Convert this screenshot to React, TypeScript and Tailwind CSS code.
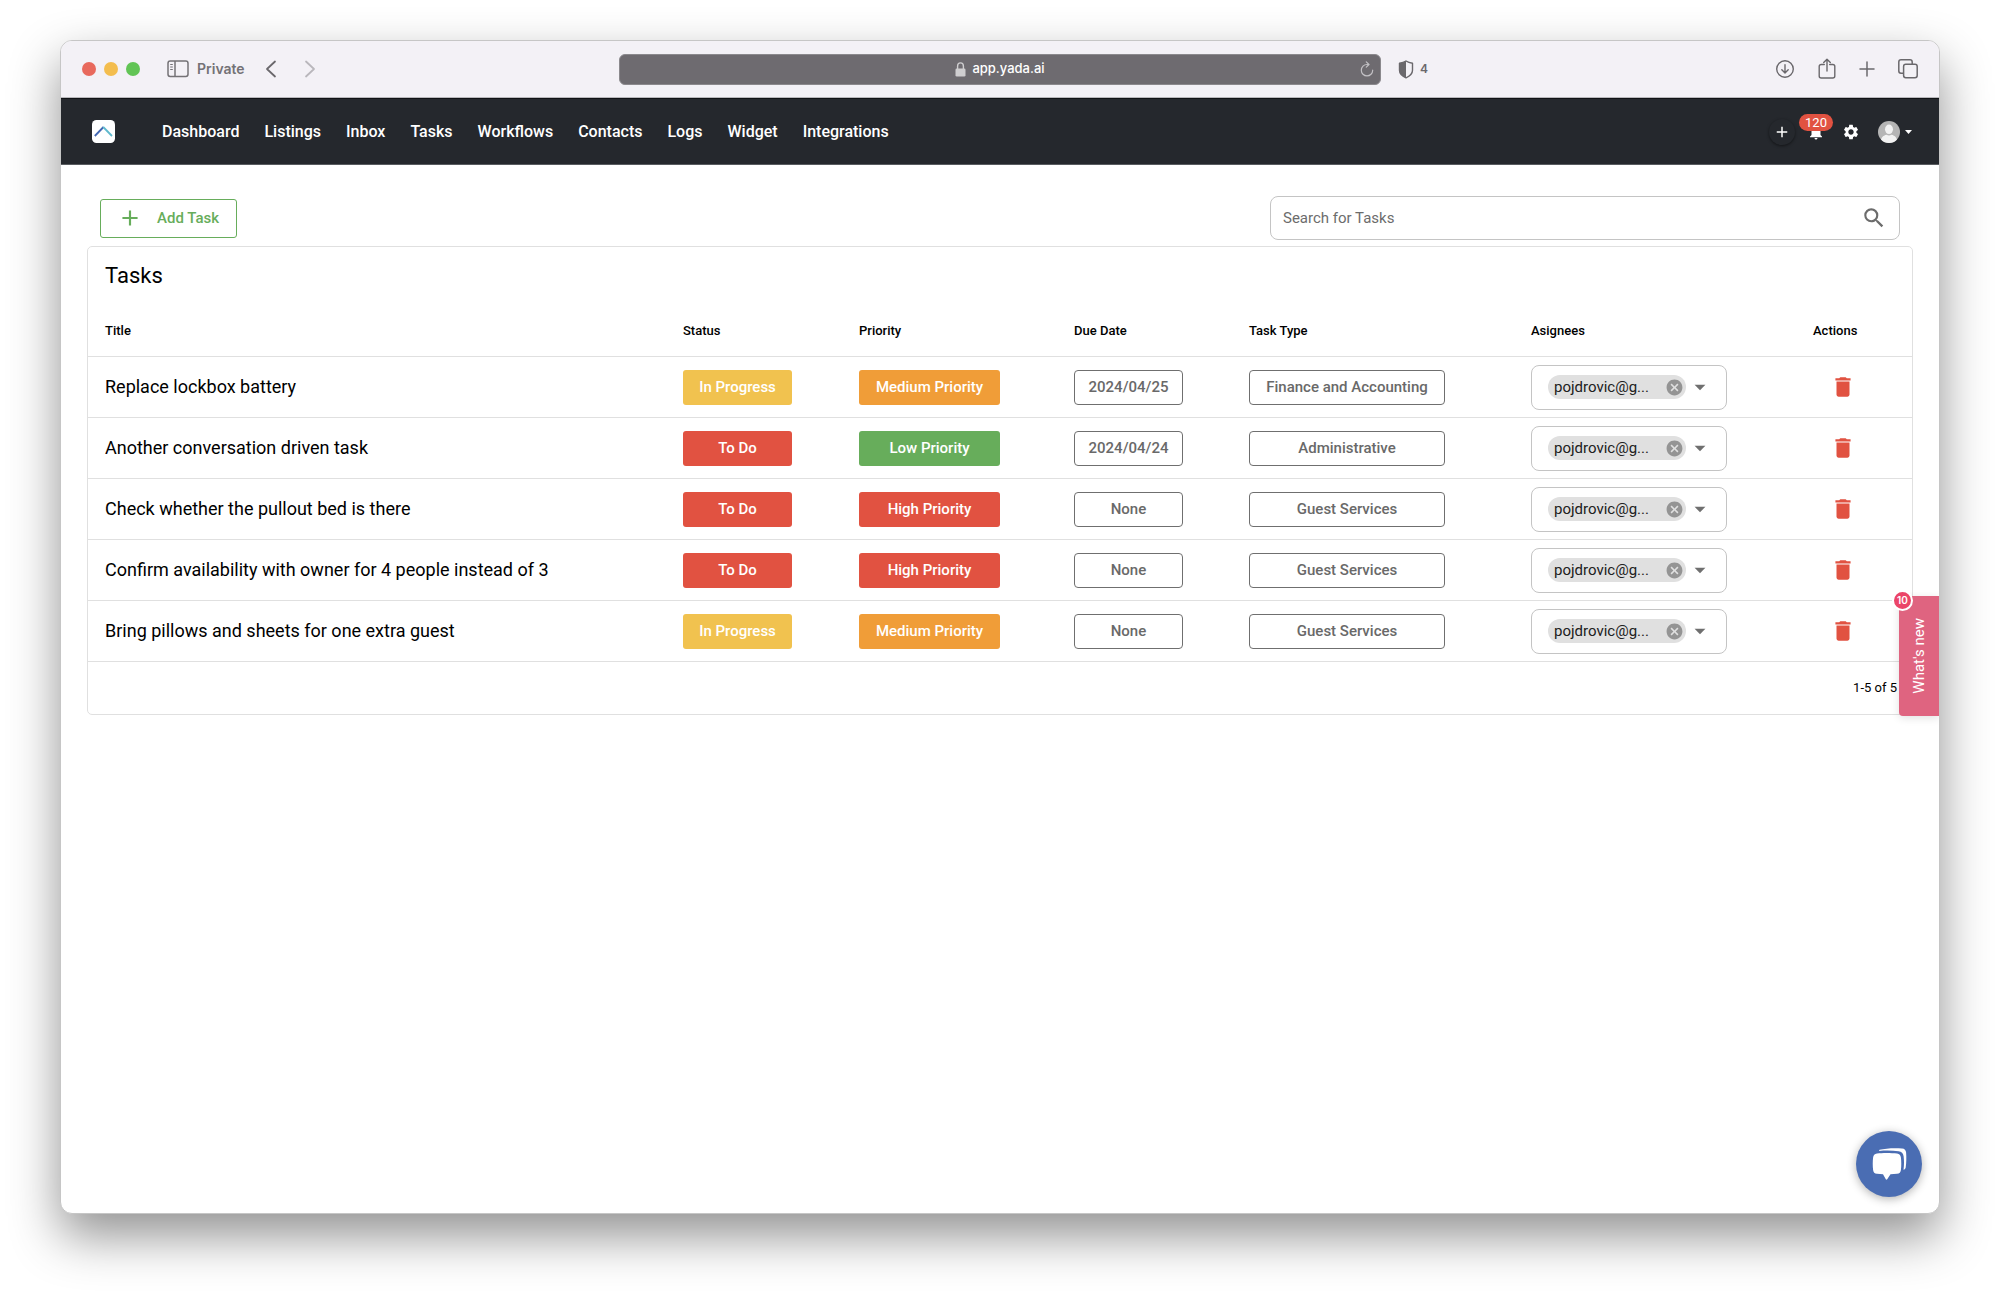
import { useState } from "react";
import { MdAdd, MdArrowDropDown, MdCancel, MdDelete, MdNotifications, MdSearch, MdSettings } from "react-icons/md";

interface Task {
  id: number;
  title: string;
  status: "In Progress" | "To Do";
  priority: "Low Priority" | "Medium Priority" | "High Priority";
  dueDate: string;
  type: string;
  assignee: string;
}

const NAV_LINKS = ["Dashboard", "Listings", "Inbox", "Tasks", "Workflows", "Contacts", "Logs", "Widget", "Integrations"];

const TASKS: Task[] = [
  { id: 1, title: "Replace lockbox battery", status: "In Progress", priority: "Medium Priority", dueDate: "2024/04/25", type: "Finance and Accounting", assignee: "pojdrovic@g..." },
  { id: 2, title: "Another conversation driven task", status: "To Do", priority: "Low Priority", dueDate: "2024/04/24", type: "Administrative", assignee: "pojdrovic@g..." },
  { id: 3, title: "Check whether the pullout bed is there", status: "To Do", priority: "High Priority", dueDate: "None", type: "Guest Services", assignee: "pojdrovic@g..." },
  { id: 4, title: "Confirm availability with owner for 4 people instead of 3", status: "To Do", priority: "High Priority", dueDate: "None", type: "Guest Services", assignee: "pojdrovic@g..." },
  { id: 5, title: "Bring pillows and sheets for one extra guest", status: "In Progress", priority: "Medium Priority", dueDate: "None", type: "Guest Services", assignee: "pojdrovic@g..." },
];

const STATUS_COLORS = {
  "In Progress": "bg-[#f1c24f]",
  "To Do": "bg-[#e15241]",
};

const PRIORITY_COLORS = {
  "Low Priority": "bg-[#67ad5b]",
  "Medium Priority": "bg-[#f09d38]",
  "High Priority": "bg-[#e15241]",
};

function BrowserBar() {
  return (
    <div className="grid h-[57px] grid-cols-[1fr_minmax(0,762px)_1fr] items-center border-b border-[#b9b8bc] bg-[#f3f1f6] font-['Inter',sans-serif] text-[#6a686c]">
      <div className="flex items-center pl-[21px]">
        <div className="flex gap-2">
          <span className="size-[14px] rounded-full bg-[#e8695d]" />
          <span className="size-[14px] rounded-full bg-[#f3bd4e]" />
          <span className="size-[14px] rounded-full bg-[#61c455]" />
        </div>
        <button type="button" className="ml-[27px] flex items-center gap-2 text-sm font-semibold text-[#747276]">
          <svg className="h-[18px] w-[22px]" viewBox="0 0 22 18" fill="none" stroke="currentColor" strokeWidth="1.5">
            <rect x="1" y="1" width="20" height="15.5" rx="2.2" />
            <path d="M8 1v15.5" />
            <path d="M3.2 4.5h2.6M3.2 7h2.6M3.2 9.5h2.6" strokeWidth="1.1" />
          </svg>
          Private
        </button>
        <button type="button" aria-label="Back" className="ml-5">
          <svg className="h-[18px] w-3" viewBox="0 0 12 18" fill="none" stroke="currentColor" strokeWidth="1.8" strokeLinecap="round" strokeLinejoin="round">
            <path d="M10 1.5 2 9l8 7.5" />
          </svg>
        </button>
        <button type="button" aria-label="Forward" className="ml-[27px] text-[#b9b7bc]">
          <svg className="h-[18px] w-3" viewBox="0 0 12 18" fill="none" stroke="currentColor" strokeWidth="1.8" strokeLinecap="round" strokeLinejoin="round">
            <path d="M2 1.5 10 9l-8 7.5" />
          </svg>
        </button>
      </div>

      <div className="relative flex h-[31px] items-center justify-center gap-[6px] rounded-md border border-[#8b898d] bg-[#6e6b70] text-[13px] font-medium text-white">
        <svg className="h-[15px] w-[11px] text-[#cfced0]" viewBox="0 0 11 15" fill="none" stroke="currentColor" strokeWidth="1.4">
          <path d="M2.6 7V4a2.9 3.1 0 0 1 5.8 0v3" />
          <rect x=".5" y="6.5" width="10" height="8" rx="1.3" fill="currentColor" stroke="none" />
        </svg>
        app.yada.ai
        <button type="button" aria-label="Reload" className="absolute right-[6px] text-[#c2c0c4]">
          <svg className="h-4 w-[14px]" viewBox="0 0 14 16" fill="none" stroke="currentColor" strokeWidth="1.2" strokeLinecap="round" strokeLinejoin="round">
            <path d="M8.500 3.500H7a5.700 5.700 0 1 0 5.700 5.700" />
            <path d="M6.300.8 9 3.500 6.300 6.200" />
          </svg>
        </button>
      </div>

      <div className="flex items-center pr-[21px] pl-[17px]">
        <svg className="h-[19px] w-4" viewBox="0 0 16 19">
          <path d="M8 1c2 1.4 4.3 2 6.5 2.3v7c0 3.6-3 6-6.5 7.5-3.5-1.5-6.5-3.9-6.5-7.5v-7C3.7 3 6 2.4 8 1Z" fill="none" stroke="currentColor" strokeWidth="1.4" strokeLinejoin="round" />
          <path d="M8 1v16.8c-3.5-1.5-6.5-3.9-6.5-7.5v-7C3.7 3 6 2.4 8 1Z" fill="currentColor" />
        </svg>
        <span className="ml-[6px] text-xs font-semibold">4</span>
        <div className="ml-auto flex items-center gap-[23px]">
          <button type="button" aria-label="Downloads">
            <svg className="size-5" viewBox="0 0 20 20" fill="none" stroke="currentColor" strokeWidth="1.4" strokeLinecap="round" strokeLinejoin="round">
              <circle cx="10" cy="10" r="8.3" />
              <path d="M10 5.800v8M6.800 10.800 10 14l3.200-3.200" />
            </svg>
          </button>
          <button type="button" aria-label="Share">
            <svg className="h-[22px] w-[18px]" viewBox="0 0 18 22" fill="none" stroke="currentColor" strokeWidth="1.4" strokeLinecap="round" strokeLinejoin="round">
              <path d="M6.300 6.500H3.200A2 2 0 0 0 1.200 8.500V18a2 2 0 0 0 2 2h11.600a2 2 0 0 0 2-2V8.500a2 2 0 0 0-2-2h-3.100" />
              <path d="M9 13V1.500M5.700 4.600 9 1.300l3.300 3.300" />
            </svg>
          </button>
          <button type="button" aria-label="New tab">
            <svg className="size-4" viewBox="0 0 16 16" fill="none" stroke="currentColor" strokeWidth="1.5" strokeLinecap="round">
              <path d="M8 1v14M1 8h14" />
            </svg>
          </button>
          <button type="button" aria-label="Show tabs">
            <svg className="size-5" viewBox="0 0 20 20" fill="none" stroke="currentColor" strokeWidth="1.5">
              <path d="M5.500 14.200H3A2.200 2.200 0 0 1 .8 12V3A2.200 2.200 0 0 1 3 .8h9A2.200 2.200 0 0 1 14.200 3v2.200" />
              <rect x="5.6" y="5.2" width="13.6" height="13.6" rx="2.2" />
            </svg>
          </button>
        </div>
      </div>
    </div>
  );
}

function NavBar() {
  return (
    <header className="flex h-[67px] items-center border-y border-t-[#101215] border-b-[#595c60] bg-[#25282d] pr-[27px] pl-[31px] text-white">
      <a href="#home" aria-label="Home">
        <svg className="size-[23px]" viewBox="0 0 23 23" fill="none" strokeWidth="1.8">
          <rect width="23" height="23" rx="4.5" fill="#fff" />
          <path d="M2.800 16 11.500 7" stroke="#4267b2" />
          <path d="M11.200 7 20 16" stroke="#5fb9cd" />
        </svg>
      </a>
      <nav className="ml-[47px] flex gap-[25px] text-base font-medium">
        {NAV_LINKS.map((link) => (
          <a key={link} href={`#${link.toLowerCase()}`}>
            {link}
          </a>
        ))}
      </nav>

      <div className="ml-auto flex items-center">
        <button type="button" aria-label="Create" className="grid size-[26px] place-items-center rounded-full shadow-[0_1px_3px_rgba(0,0,0,0.5)]">
          <MdAdd size={18} />
        </button>
        <button type="button" aria-label="Notifications" className="relative ml-3">
          <MdNotifications size={18} />
          <span className="absolute -top-[9px] left-1/2 h-[17px] w-[34px] -translate-x-1/2 rounded-full bg-[#e15241] text-[13px] leading-[17px]">
            120
          </span>
        </button>
        <button type="button" aria-label="Settings" className="ml-[17px]">
          <MdSettings size={18} />
        </button>
        <button type="button" aria-label="Account" className="ml-[18px] flex items-center gap-[5px]">
          <svg className="size-[22px]" viewBox="0 0 22 22">
            <clipPath id="avatar">
              <circle cx="11" cy="11" r="11" />
            </clipPath>
            <g clipPath="url(#avatar)">
              <rect width="22" height="22" fill="#b5b5b5" />
              <ellipse cx="11" cy="8.3" rx="4" ry="4.8" fill="#f2f2f2" />
              <path d="M2.500 22c0-5 2.500-7.600 6-8.300 1.500 1 3.500 1 5 0 3.500.7 6 3.300 6 8.300Z" fill="#f2f2f2" />
            </g>
          </svg>
          <svg className="h-1 w-[7px]" viewBox="0 0 7 4">
            <path d="M0 0h7L3.500 4Z" fill="#fff" />
          </svg>
        </button>
      </div>
    </header>
  );
}

function OutlinedButton({ label, width }: { label: string; width: string }) {
  return (
    <button type="button" className={`h-[35px] rounded border border-[#6f6f6f] text-[15px] font-medium text-[#696969] ${width}`}>
      {label}
    </button>
  );
}

function TaskRow({ task, onDelete }: { task: Task; onDelete: () => void }) {
  return (
    <tr className="h-[61px] *:border-b *:border-[#e0e0e0]">
      <td className="pl-[17px] text-lg">{task.title}</td>
      <td>
        <button type="button" className={`h-[35px] w-[109px] rounded-[3px] text-[15px] font-medium text-white ${STATUS_COLORS[task.status]}`}>
          {task.status}
        </button>
      </td>
      <td>
        <button type="button" className={`h-[35px] w-[141px] rounded-[3px] text-[15px] font-medium text-white ${PRIORITY_COLORS[task.priority]}`}>
          {task.priority}
        </button>
      </td>
      <td>
        <OutlinedButton label={task.dueDate} width="w-[109px]" />
      </td>
      <td>
        <OutlinedButton label={task.type} width="w-[196px]" />
      </td>
      <td>
        <div className="flex h-[45px] w-[196px] items-center rounded-lg border border-[#c4c4c4] pl-4">
          <span className="flex h-6 w-[138px] items-center justify-between rounded-full bg-[#e0e0e0] pr-[2px] pl-[6px] text-[15px] text-[#212121]">
            {task.assignee}
            <button type="button" aria-label={`Remove ${task.assignee}`} className="text-[#949494]">
              <MdCancel size={19} />
            </button>
          </span>
          <button type="button" aria-label="Open assignees" className="ml-px text-[#6f6f6f]">
            <MdArrowDropDown size={26} />
          </button>
        </div>
      </td>
      <td>
        <button type="button" aria-label={`Delete ${task.title}`} onClick={onDelete} className="ml-[17px] block text-[#e15241]">
          <MdDelete size={26} />
        </button>
      </td>
    </tr>
  );
}

function TaskTable({ tasks, onDelete }: { tasks: Task[]; onDelete: (id: number) => void }) {
  return (
    <section className="rounded-[5px] border border-[#e0e0e0] text-black">
      <h1 className="pl-[17px] text-[22px] leading-[58px]">Tasks</h1>
      <table className="w-full table-fixed border-separate border-spacing-0 text-left">
        <thead>
          <tr className="h-[52px] text-[13px] *:border-b *:border-[#e0e0e0] *:font-medium">
            <th className="pl-[17px]">Title</th>
            <th className="w-[176px]">Status</th>
            <th className="w-[215px]">Priority</th>
            <th className="w-[175px]">Due Date</th>
            <th className="w-[282px]">Task Type</th>
            <th className="w-[282px]">Asignees</th>
            <th className="w-[99px]">Actions</th>
          </tr>
        </thead>
        <tbody>
          {tasks.map((task) => (
            <TaskRow key={task.id} task={task} onDelete={() => onDelete(task.id)} />
          ))}
        </tbody>
      </table>
      <p className="pr-[15px] text-right text-[13px] leading-[52px]">
        1-{tasks.length} of {tasks.length}
      </p>
    </section>
  );
}

export default function App() {
  const [tasks, setTasks] = useState(TASKS);
  const [query, setQuery] = useState("");

  const visible = tasks.filter((t) => t.title.toLowerCase().includes(query.toLowerCase()));

  return (
    <div className="flex min-h-screen bg-white px-[60px] pt-10 pb-20 font-['Roboto',sans-serif]">
      <div className="flex flex-1 flex-col overflow-hidden rounded-xl border border-[#c6c6c6] bg-white shadow-[0_22px_50px_rgba(0,0,0,0.43)]">
        <BrowserBar />
        <div className="relative flex-1">
          <NavBar />

          <main className="px-[26px] pt-[31px]">
            {/* Toolbar */}
            <div className="mb-[6px] flex items-center justify-between px-[13px]">
              <button type="button" className="flex h-[39px] w-[137px] items-center gap-[14px] rounded-[3px] border border-[#67ad5b] pl-4 text-[15px] font-medium text-[#67ad5b]">
                <MdAdd size={26} />
                Add Task
              </button>
              <label className="flex h-11 w-[630px] items-center rounded-lg border border-[#c4c4c4] pr-3 pl-3 text-[#6c6c6c]">
                <input
                  type="text"
                  value={query}
                  onChange={(e) => setQuery(e.target.value)}
                  aria-label="Search for Tasks"
                  placeholder="Search for Tasks"
                  className="flex-1 text-[15px] outline-none placeholder:text-[#6c6c6c]"
                />
                <MdSearch size={26} />
              </label>
            </div>

            <TaskTable tasks={visible} onDelete={(id) => setTasks(tasks.filter((t) => t.id !== id))} />
          </main>

          {/* What's new tab */}
          <div className="absolute top-1/2 right-0 -translate-y-1/2">
            <button type="button" className="grid h-[120px] w-10 place-items-center rounded-l bg-[#df6480] text-[15px] text-white shadow-[0_2px_8px_rgba(0,0,0,0.12)]">
              <span className="rotate-180 [writing-mode:vertical-rl]">What's new</span>
            </button>
            <span className="absolute -top-[6px] -left-[7px] size-[21px] rounded-full border-2 border-white bg-[#eb4568] text-center font-['Inter',sans-serif] text-[10px] leading-[17px] font-semibold text-white">
              10
            </span>
          </div>

          {/* Chat launcher */}
          <button type="button" aria-label="Open chat" className="absolute right-[17px] bottom-4 grid size-[66px] place-items-center rounded-full bg-[#4a6db3] shadow-[0_2px_10px_rgba(0,0,0,0.3)]">
            <svg className="h-[34px] w-9" viewBox="0 0 36 34" fill="#fff">
              <path d="M6 6.500c5-.7 14-.7 20 0 2.500.3 3.600 1.600 3.900 4 .5 4 .5 8.500 0 12.500-.3 2.400-1.400 3.500-3.900 3.800l-6.500.5-3.300 5a.8.8 0 0 1-1.400 0l-2.800-5-6-.5c-2.500-.3-3.600-1.400-3.900-3.800-.5-4-.5-8.500 0-12.500.3-2.400 1.400-3.700 3.900-4Z" />
              <path d="M8.500 2.800c6-1.500 15-1.900 22.500-1.300 2.600.2 3.900 1.500 4.100 4.100.4 5 .3 10-.4 15-.2 1.200-1 2-2.200 2.200.6-4.500.7-9 .1-13.500-.4-3-2-4.600-5-5-6-.8-13-.9-19.600-.3Z" />
            </svg>
          </button>
        </div>
      </div>
    </div>
  );
}
